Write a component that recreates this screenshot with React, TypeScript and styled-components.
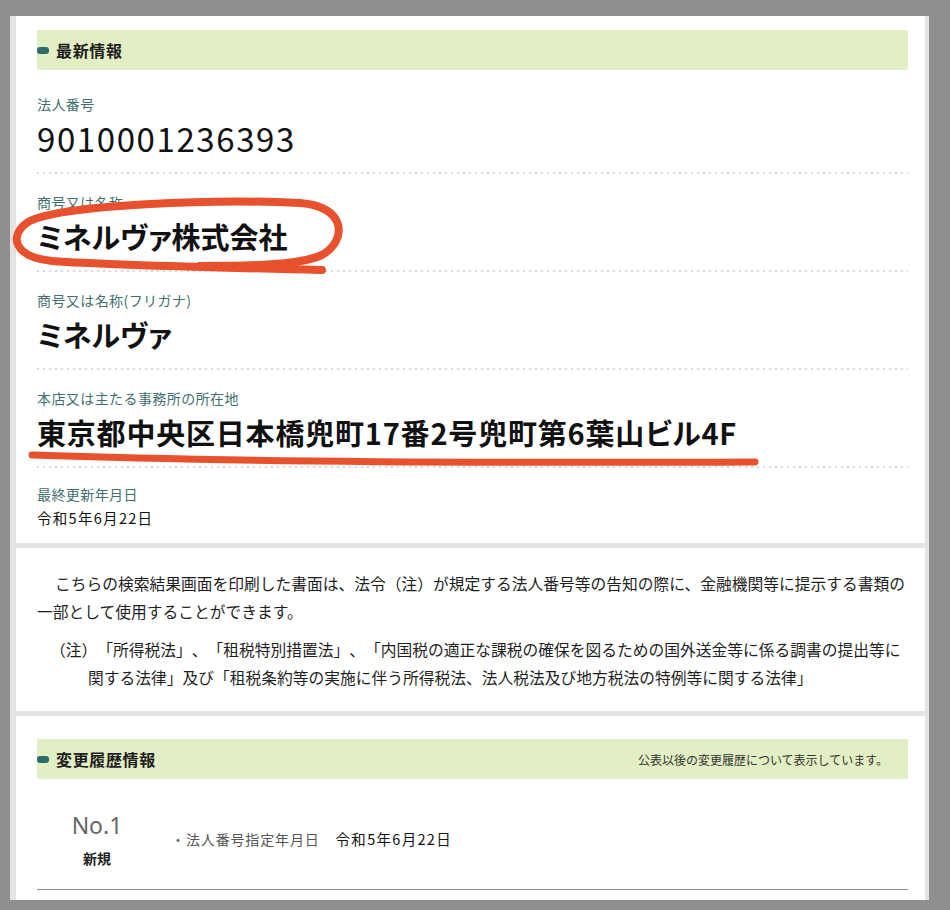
import React from "react";
import styled, { createGlobalStyle } from "styled-components";

const GlobalStyle = createGlobalStyle`
  html, body { margin: 0; padding: 0; background: #8f8f8f; }
  body {
    font-family: "Noto Sans CJK JP", "Noto Sans", sans-serif;
    color: #222;
    width: 950px;
    height: 910px;
    overflow: hidden;
  }
  * { box-sizing: border-box; }
`;

const Root = styled.div`
  position: relative;
  width: 950px;
  height: 910px;
  padding: 16px 0 0 10px;
`;

const Page = styled.div`
  width: 919px;
  background: #e3e3e3;
  padding: 0 4px 0 6px;
  display: flex;
  flex-direction: column;
  gap: 5px;
`;

const Section = styled.section<{ $pad: string }>`
  background: #fff;
  padding: ${(p) => p.$pad};
`;

const Band = styled.div`
  display: flex;
  align-items: center;
  justify-content: space-between;
  height: 40px;
  background: #e2eec3;
  padding-right: 20px;
  border-radius: 2px;
`;

const BandTitle = styled.h2`
  display: flex;
  align-items: center;
  gap: 7px;
  margin: 0;
  font-size: 16px;
  font-weight: 700;
  color: #1e1e1e;
  letter-spacing: 0.04em;
`;

const Marker = styled.span`
  display: block;
  width: 12px;
  height: 7px;
  border-radius: 3px;
  background: #2f6b6b;
`;

const BandNote = styled.span`
  font-size: 12px;
  color: #333;
`;

const Rows = styled.div`
  margin-top: 6px;
`;

const Row = styled.div<{ $last?: boolean }>`
  padding: ${(p) => (p.$last ? "16px 0 0" : "18px 0 16px")};
  background: ${(p) =>
    p.$last
      ? "none"
      : "linear-gradient(to right, #d6d6d6 2px, transparent 2px) left bottom / 6px 2px repeat-x"};
`;

const Label = styled.div`
  font-size: 14px;
  line-height: 20px;
  color: #3f6f70;
  letter-spacing: 0.03em;
`;

const Value = styled.div<{ $size: number; $bold?: boolean; $spacing?: number; $lh?: number }>`
  margin-top: 4px;
  font-size: ${(p) => p.$size}px;
  line-height: ${(p) => p.$lh ?? 40}px;
  font-weight: ${(p) => (p.$bold ? 700 : 400)};
  letter-spacing: ${(p) => p.$spacing ?? 0}px;
  font-feature-settings: "palt";
  color: #111;
  white-space: nowrap;
`;

const Paragraph = styled.p`
  margin: 0;
  font-size: 15.75px;
  line-height: 28px;
  text-indent: 18px;
  color: #1e1e1e;
  white-space: nowrap;
  text-spacing-trim: space-all;
`;

const Note = styled.p`
  margin: 10px 0 0;
  font-size: 15.75px;
  line-height: 28px;
  padding-left: 51px;
  text-indent: -38px;
  color: #1e1e1e;
  white-space: nowrap;
  text-spacing-trim: space-all;
`;

const History = styled.div`
  display: flex;
  align-items: center;
  margin-top: 31px;
  padding-bottom: 21px;
  border-bottom: 1px solid #8a8a8a;
`;

const HistoryNo = styled.div`
  width: 120px;
  display: flex;
  flex-direction: column;
  align-items: center;
`;

const NoText = styled.div`
  font-family: "Noto Sans", "Noto Sans CJK JP", sans-serif;
  font-size: 23px;
  line-height: 30px;
  color: #666;
`;

const Kind = styled.div`
  margin-top: 8px;
  font-size: 14px;
  line-height: 20px;
  font-weight: 700;
  color: #222;
`;

const HistoryItem = styled.div`
  margin-left: 18px;
  display: flex;
  align-items: center;
  font-size: 14px;
  line-height: 20px;
`;

const Bullet = styled.span`
  color: #666;
  width: 15px;
  margin-left: -4px;
`;

const ItemLabel = styled.span`
  color: #555;
  letter-spacing: 0.06em;
`;

const ItemValue = styled.span`
  margin-left: 16px;
  color: #111;
  letter-spacing: 1.3px;
  font-size: 14.5px;
`;

const Overlay = styled.svg`
  position: absolute;
  left: 0;
  top: 0;
  pointer-events: none;
`;

export default function App() {
  return (
    <>
      <GlobalStyle />
      <Root>
        <Page>
          <Section $pad="14px 17px 15px 21px">
            <Band>
              <BandTitle>
                <Marker />
                最新情報
              </BandTitle>
            </Band>
            <Rows>
              <Row>
                <Label>法人番号</Label>
                <Value $size={33} $spacing={1.6}>9010001236393</Value>
              </Row>
              <Row>
                <Label>商号又は名称</Label>
                <Value $size={29} $bold>ミネルヴァ株式会社</Value>
              </Row>
              <Row>
                <Label>商号又は名称(フリガナ)</Label>
                <Value $size={29} $bold>ミネルヴァ</Value>
              </Row>
              <Row>
                <Label>本店又は主たる事務所の所在地</Label>
                <Value $size={29} $bold $spacing={0.8}>
                  東京都中央区日本橋兜町17番2号兜町第6葉山ビル4F
                </Value>
              </Row>
              <Row $last>
                <Label>最終更新年月日</Label>
                <Value $size={14.5} $lh={20} $spacing={1.3}>令和5年6月22日</Value>
              </Row>
            </Rows>
          </Section>

          <Section $pad="22px 17px 19px 21px">
            <Paragraph>
              こちらの検索結果画面を印刷した書面は、法令（注）が規定する法人番号等の告知の際に、金融機関等に提示する書類の
              <br />
              一部として使用することができます。
            </Paragraph>
            <Note>
              （注）「所得税法」、「租税特別措置法」、「内国税の適正な課税の確保を図るための国外送金等に係る調書の提出等に
              <br />
              関する法律」及び「租税条約等の実施に伴う所得税法、法人税法及び地方税法の特例等に関する法律」
            </Note>
          </Section>

          <Section $pad="23px 17px 10px 21px">
            <Band>
              <BandTitle>
                <Marker />
                変更履歴情報
              </BandTitle>
              <BandNote>公表以後の変更履歴について表示しています。</BandNote>
            </Band>
            <History>
              <HistoryNo>
                <NoText>No.1</NoText>
                <Kind>新規</Kind>
              </HistoryNo>
              <HistoryItem>
                <Bullet>・</Bullet>
                <ItemLabel>法人番号指定年月日</ItemLabel>
                <ItemValue>令和5年6月22日</ItemValue>
              </HistoryItem>
            </History>
          </Section>
        </Page>

        <Overlay width="950" height="910" viewBox="0 0 950 910">
          <path
            d="M 322 270 C 250 268, 120 266, 52 261 C 14 257, 8 236, 28 222 C 60 204, 220 199, 300 203 C 346 206, 348 240, 322 255 C 300 265, 250 266, 200 266"
            fill="none"
            stroke="#e8512d"
            strokeWidth="8"
            strokeLinecap="round"
            strokeLinejoin="round"
          />
          <path
            d="M 32 455 Q 300 464, 755 462"
            fill="none"
            stroke="#e8512d"
            strokeWidth="7"
            strokeLinecap="round"
          />
        </Overlay>
      </Root>
    </>
  );
}
